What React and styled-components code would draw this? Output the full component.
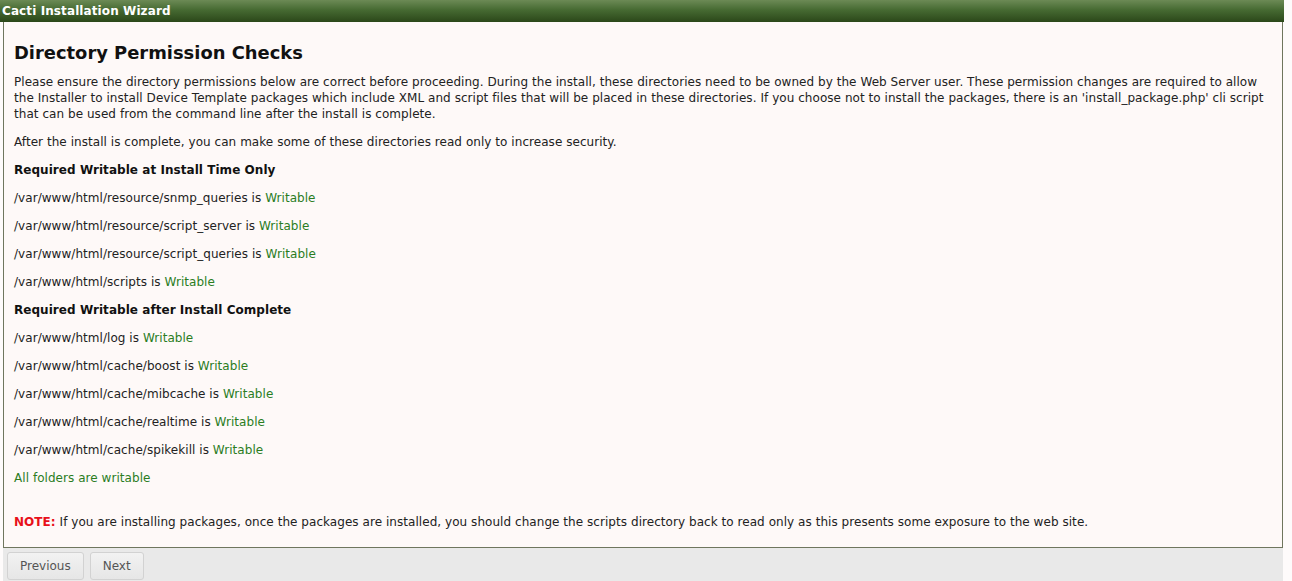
import React from "react";
import styled, { createGlobalStyle } from "styled-components";

const GlobalStyle = createGlobalStyle`
  html, body {
    margin: 0;
    padding: 0;
    background: #fefbfb;
  }
  body {
    font-family: Verdana, "DejaVu Sans", sans-serif;
    font-size: 12px;
    color: #111;
  }
`;

const requiredInstall = [
  "/var/www/html/resource/snmp_queries",
  "/var/www/html/resource/script_server",
  "/var/www/html/resource/script_queries",
  "/var/www/html/scripts",
];

const requiredAfter = [
  "/var/www/html/log",
  "/var/www/html/cache/boost",
  "/var/www/html/cache/mibcache",
  "/var/www/html/cache/realtime",
  "/var/www/html/cache/spikekill",
];

const App = () => {
  return (
    <>
      <GlobalStyle />
      <Wizard>
        <TitleBar>Cacti Installation Wizard</TitleBar>
        <Panel>
          <Heading>Directory Permission Checks</Heading>
          <Text>
            Please ensure the directory permissions below are correct before
            proceeding. During the install, these directories need to be owned
            by the Web Server user. These permission changes are required to
            allow the Installer to install Device Template packages which
            include XML and script files that will be placed in these
            directories. If you choose not to install the packages, there is an
            'install_package.php' cli script that can be used from the command
            line after the install is complete.
          </Text>
          <Text>
            After the install is complete, you can make some of these
            directories read only to increase security.
          </Text>
          <Text $bold>Required Writable at Install Time Only</Text>
          {requiredInstall.map((path) => (
            <Text key={path}>
              {path} is <Status>Writable</Status>
            </Text>
          ))}
          <Text $bold>Required Writable after Install Complete</Text>
          {requiredAfter.map((path) => (
            <Text key={path}>
              {path} is <Status>Writable</Status>
            </Text>
          ))}
          <Text>
            <Status>All folders are writable</Status>
          </Text>
          <Note>
            <NoteLabel>NOTE:</NoteLabel> If you are installing packages, once
            the packages are installed, you should change the scripts directory
            back to read only as this presents some exposure to the web site.
          </Note>
        </Panel>
        <Footer>
          <Button>Previous</Button>
          <Button>Next</Button>
        </Footer>
      </Wizard>
    </>
  );
};

const Wizard = styled.div`
  width: 1280px;
  margin-left: 3px;
  display: flex;
  flex-direction: column;
`;

const TitleBar = styled.div`
  height: 22px;
  line-height: 22px;
  padding-left: 2px;
  margin-left: -3px;
  margin-right: -1px;
  background: linear-gradient(to bottom, #6c8a55 0%, #466a32 45%, #2b4719 100%);
  color: #fff;
  font-weight: bold;
  font-size: 12px;
  letter-spacing: 0.1px;
  white-space: nowrap;
`;

const Panel = styled.div`
  background: #fef9f8;
  border: 1px solid #6f765e;
  border-top: none;
  padding: 20px 10px 17px 10px;
  display: flex;
  flex-direction: column;
  gap: 12px;
`;

const Heading = styled.h2`
  margin: 0 0 -2px 0;
  font-size: 17.9px;
  font-weight: bold;
  line-height: 22px;
  color: #111;
`;

const Text = styled.p`
  margin: 0;
  line-height: 16px;
  letter-spacing: 0.05px;
  font-weight: ${(p) => (p.$bold ? "bold" : "normal")};
  color: ${(p) => (p.$bold ? "#111" : "#222")};
`;

const Status = styled.span`
  color: #2b7d1f;
`;

const Note = styled.p`
  margin: 16px 0 0 0;
  line-height: 16px;
  letter-spacing: 0.05px;
  color: #222;
`;

const NoteLabel = styled.span`
  color: #e8101a;
  font-weight: bold;
`;

const Footer = styled.div`
  background: #e9e9e9;
  height: 34px;
  padding: 4px 4px 0 4px;
  display: flex;
  align-items: flex-start;
  gap: 6px;
  box-sizing: border-box;
`;

const Button = styled.button`
  height: 28px;
  padding: 0 12px;
  background: linear-gradient(to bottom, #f2f2f2, #e6e6e6);
  border: 1px solid #d2d2d2;
  border-radius: 3px;
  color: #555;
  font-family: Verdana, "DejaVu Sans", sans-serif;
  font-size: 12px;
  cursor: pointer;
`;

export default App;
